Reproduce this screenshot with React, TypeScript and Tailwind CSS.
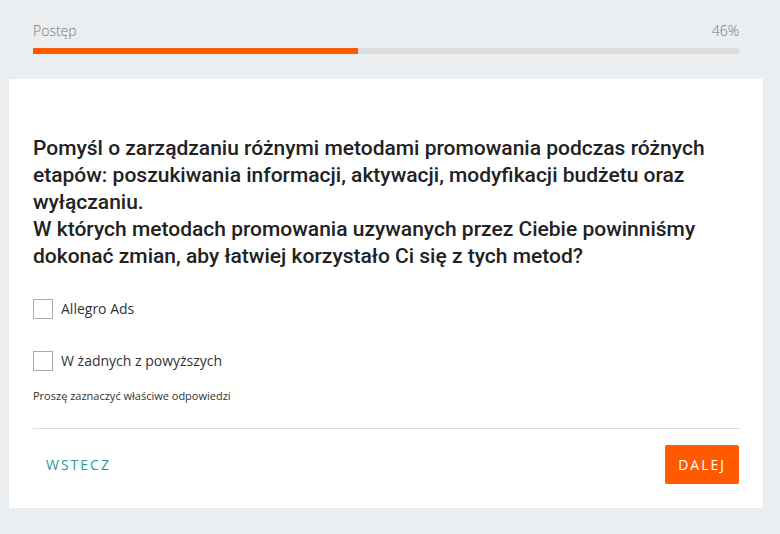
export default function App() {
  const progress = 46;
  return (
    <div className="min-h-[534px] w-full bg-[#ebeef1] pt-[20px] pb-[26px]">
      <div className="px-[33px] pr-[41px]">
        <div className="flex items-center justify-between font-['Open_Sans',sans-serif] text-[14px] font-light text-[#777]">
          <span>Postęp</span>
          <span>{progress}%</span>
        </div>
        <div className="mt-[7px] h-[6px] w-full bg-[#dcdcdc]">
          <div className="h-full bg-[#ff5a00]" style={{ width: `${progress}%` }} />
        </div>
      </div>

      <div className="ml-[9px] mr-[17px] mt-[25px] bg-white px-[24px] pt-[56px] pb-[24px]">
        <h1 className="font-['Roboto',sans-serif] text-[21px] font-medium leading-[27px] text-[#222]">
          Pomyśl o zarządzaniu różnymi metodami promowania podczas różnych
          etapów: poszukiwania informacji, aktywacji, modyfikacji budżetu oraz
          wyłączaniu.
          <br />
          W których metodach promowania uzywanych przez Ciebie powinniśmy
          dokonać zmian, aby łatwiej korzystało Ci się z tych metod?
        </h1>

        <div className="mt-[28px] flex flex-col gap-[31px] font-['Open_Sans',sans-serif] text-[14px] text-[#333]">
          <label className="flex items-center gap-[8px]">
            <span className="h-[20px] w-[20px] border border-[#aaa] bg-white" />
            <span>Allegro Ads</span>
          </label>
          <label className="flex items-center gap-[8px]">
            <span className="h-[20px] w-[20px] border border-[#aaa] bg-white" />
            <span>W żadnych z powyższych</span>
          </label>
        </div>

        <p className="mt-[17px] font-['Open_Sans',sans-serif] text-[11px] text-[#333]">
          Proszę zaznaczyć właściwe odpowiedzi
        </p>

        <div className="mt-[23px] h-px bg-[#dcdcdc]" />

        <div className="mt-[16px] flex items-center justify-between">
          <button className="px-[13px] font-['Open_Sans',sans-serif] text-[14px] tracking-[2px] text-[#2a9d8f]">
            WSTECZ
          </button>
          <button className="h-[39px] rounded-[2px] bg-[#ff5a00] px-[13px] font-['Open_Sans',sans-serif] text-[14px] tracking-[2px] text-white">
            DALEJ
          </button>
        </div>
      </div>
    </div>
  );
}
